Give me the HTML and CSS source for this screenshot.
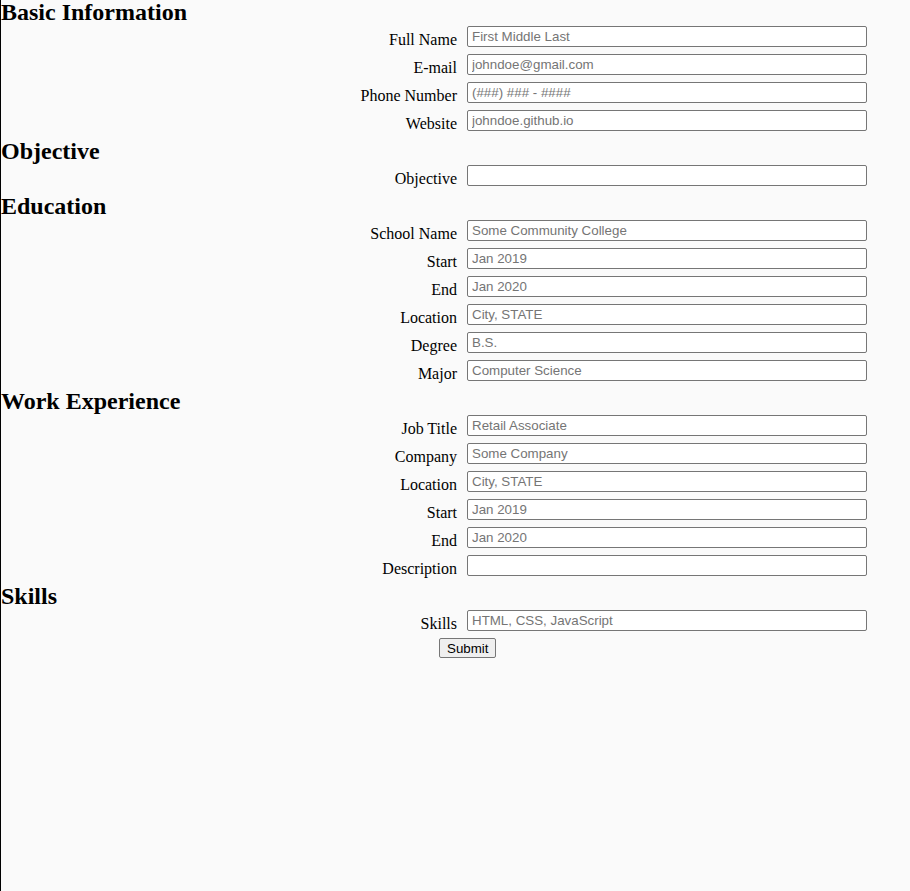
FILE: index.html
```html
<!DOCTYPE html>
<html>
<head>
<meta charset="utf-8">
<link rel="stylesheet" href="styles.css">
</head>
<body>
<form class="form">
  <h2 class="section first">Basic Information</h2>
  <div class="row"><label class="label">Full Name</label><input class="field" type="text" placeholder="First Middle Last"></div>
  <div class="row"><label class="label">E-mail</label><input class="field" type="text" placeholder="johndoe@gmail.com"></div>
  <div class="row"><label class="label">Phone Number</label><input class="field" type="text" placeholder="(###) ### - ####"></div>
  <div class="row"><label class="label">Website</label><input class="field" type="text" placeholder="johndoe.github.io"></div>

  <h2 class="section">Objective</h2>
  <div class="row"><label class="label">Objective</label><input class="field" type="text"></div>

  <h2 class="section">Education</h2>
  <div class="row"><label class="label">School Name</label><input class="field" type="text" placeholder="Some Community College"></div>
  <div class="row"><label class="label">Start</label><input class="field" type="text" placeholder="Jan 2019"></div>
  <div class="row"><label class="label">End</label><input class="field" type="text" placeholder="Jan 2020"></div>
  <div class="row"><label class="label">Location</label><input class="field" type="text" placeholder="City, STATE"></div>
  <div class="row"><label class="label">Degree</label><input class="field" type="text" placeholder="B.S."></div>
  <div class="row"><label class="label">Major</label><input class="field" type="text" placeholder="Computer Science"></div>

  <h2 class="section">Work Experience</h2>
  <div class="row"><label class="label">Job Title</label><input class="field" type="text" placeholder="Retail Associate"></div>
  <div class="row"><label class="label">Company</label><input class="field" type="text" placeholder="Some Company"></div>
  <div class="row"><label class="label">Location</label><input class="field" type="text" placeholder="City, STATE"></div>
  <div class="row"><label class="label">Start</label><input class="field" type="text" placeholder="Jan 2019"></div>
  <div class="row"><label class="label">End</label><input class="field" type="text" placeholder="Jan 2020"></div>
  <div class="row"><label class="label">Description</label><input class="field" type="text"></div>

  <h2 class="section">Skills</h2>
  <div class="row"><label class="label">Skills</label><input class="field" type="text" placeholder="HTML, CSS, JavaScript"></div>
  <div class="submit-row"><button class="submit" type="button">Submit</button></div>
</form>
</body>
</html>
```

FILE: styles.css
```css
html {
  background: #fafafa;
}
body {
  margin: 0;
  min-height: 100vh;
  border-left: 1px solid #000;
  background: #fafafa;
  font-family: "Liberation Serif", "Times New Roman", serif;
  font-size: 16px;
  color: #000;
}
.form {
  margin: 0;
}
.section {
  margin: 0;
  font-size: 24px;
  font-weight: bold;
  line-height: 27px;
  padding-left: 0;
}
.section.first {
  margin-top: -1px;
}
.row {
  display: flex;
  align-items: flex-start;
  height: 28px;
}
.label {
  width: 456px;
  text-align: right;
  padding-top: 5px;
  line-height: 18px;
  margin-right: 10px;
}
.field {
  box-sizing: border-box;
  width: 400px;
  height: 21px;
  margin: 0;
  padding: 1px 2px 1px 4px;
  border: 1px solid #767676;
  border-radius: 2px;
  background: #fff;
  font-family: "Liberation Sans", Arial, sans-serif;
  font-size: 13.333px;
  color: #000;
}
.field::placeholder {
  color: #757575;
}
.submit-row {
  padding-left: 438px;
}
.submit {
  margin: 0;
  height: 20px;
  padding: 1px 7px;
  border: 1px solid #767676;
  border-radius: 2px;
  background: #efefef;
  font-family: "Liberation Sans", Arial, sans-serif;
  font-size: 13.333px;
  color: #000;
}
```
